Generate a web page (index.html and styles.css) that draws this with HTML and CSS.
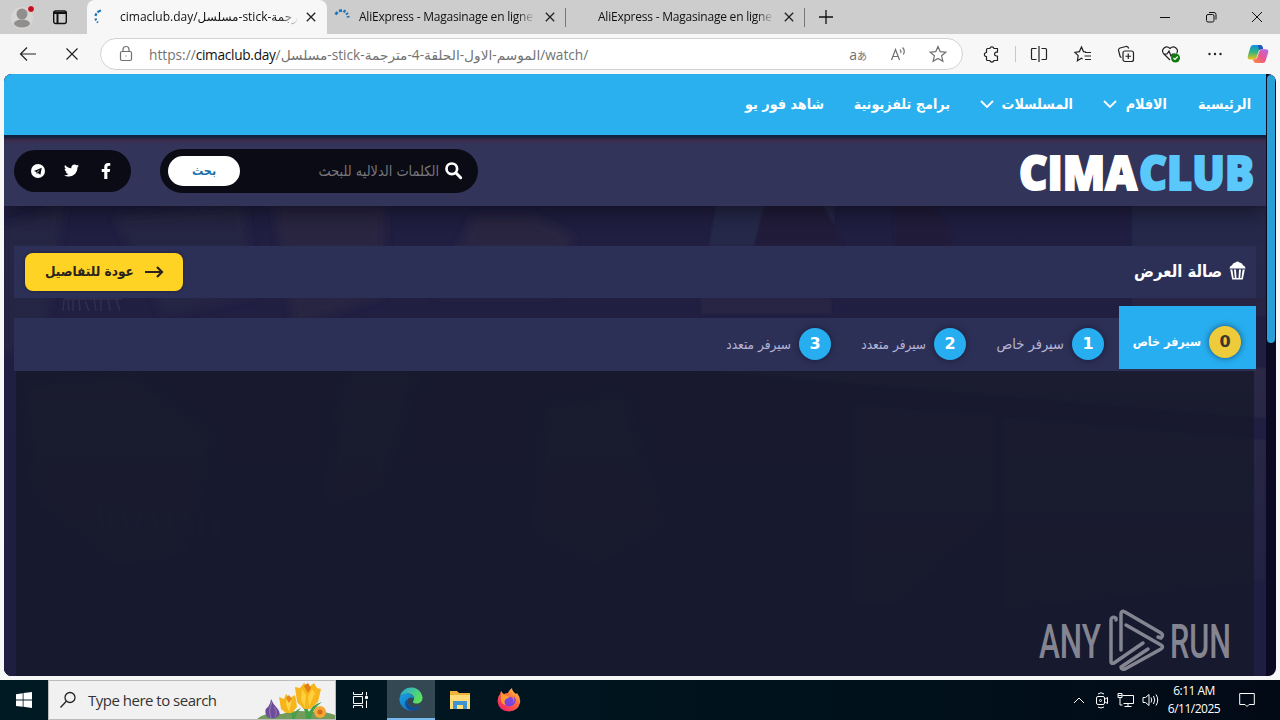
FILE: index.html
```
<!DOCTYPE html>
<html lang="en" dir="ltr">
<head>
  <title>cimaclub.day</title>
  <meta charset="utf-8">
  <link rel="stylesheet" href="styles.css">
</head>
<body>
  <!-- tabs -->
  <div class="tabs">
    <svg class="profile" width="26" height="26" viewBox="0 0 26 26"><circle cx="13" cy="14" r="11" fill="#d8d6d4"/><circle cx="13" cy="10" r="5.5" fill="#918f8d"/><ellipse cx="13" cy="19.500" rx="8" ry="4" fill="#918f8d"/><circle cx="22" cy="5" r="3.500" fill="#c50f1f" stroke="#ddd" stroke-width="1"/></svg>
    <svg class="tab-menu" width="16" height="16" viewBox="0 0 16 16" fill="none" stroke="#111" stroke-width="1.400"><rect x="1.700" y="2" width="12.600" height="12.500" rx="2"/><path d="M2 4h12M5.500 5v9" stroke-width="2"/></svg>
    <div class="tab active">
      <svg width="16" height="16" viewBox="0 0 16 16" fill="none" stroke="#1b74b8" stroke-width="2.200"><path d="M9 1.500C6.500 2 4 4 3.500 7" stroke-dasharray="4 1.500"/><path d="M3.500 9.500c.3 1.500 1.200 3 2.500 4" stroke-dasharray="2 1.500"/></svg>
      <span class="tab-title t1">cimaclub.day/مسلسل-stick-مترجمة</span>
      <svg class="close" width="10" height="10" viewBox="0 0 10 10"><path d="M.8.8l8.400 8.400M9.200.8L.8 9.200"/></svg>
    </div>
    <div class="tab">
      <svg width="16" height="16" viewBox="0 0 16 16" fill="none" stroke="#1b74b8" stroke-width="2.800"><path d="M.5 5.500l2-2.500M4 2l3-.7M8.500 1.800l2 1M11.500 4l1 1.500M13 7l.3 1.500"/></svg>
      <span class="tab-title t2">AliExpress - Magasinage en ligne</span>
      <svg class="close" width="10" height="10" viewBox="0 0 10 10"><path d="M.8.8l8.400 8.400M9.200.8L.8 9.200"/></svg>
    </div>
    <div class="tab">
      <svg width="16" height="16"></svg>
      <span class="tab-title t2">AliExpress - Magasinage en ligne</span>
      <svg class="close" width="10" height="10" viewBox="0 0 10 10"><path d="M.8.8l8.400 8.400M9.200.8L.8 9.200"/></svg>
    </div>
    <svg class="new-tab" width="14" height="14" viewBox="0 0 14 14" stroke="#111" stroke-width="1.300"><path d="M7 0v14M0 7h14"/></svg>
    <div class="window-buttons">
      <svg width="12" height="12" viewBox="0 0 12 12"><path d="M1 6.500h10"/></svg>
      <svg width="12" height="12" viewBox="0 0 12 12"><rect x="1.500" y="3.500" width="7.500" height="7.500" rx="1.500"/><path d="M4 1.500h5a2 2 0 0 1 2 2v5"/></svg>
      <svg width="12" height="12" viewBox="0 0 12 12"><path d="M1 1l10 10M11 1L1 11"/></svg>
    </div>
  </div>

  <!-- address bar -->
  <div class="toolbar">
    <svg class="back" width="18" height="16" viewBox="0 0 18 16"><path d="M17 8H2M8 1.500L1.500 8 8 14.500"/></svg>
    <svg class="stop" width="14" height="14" viewBox="0 0 14 14"><path d="M1.500 1.500l11 11M12.500 1.500l-11 11"/></svg>
    <div class="address">
      <svg width="14" height="16" viewBox="0 0 14 16" stroke="#666"><rect x="1.500" y="5.500" width="11" height="9" rx="1.500"/><path d="M4 5.500V3.500a3 3 0 0 1 6 0v2M6.500 10h1"/></svg>
      <div class="url">https://<b>cimaclub.day</b>/مسلسل-stick-الموسم-الاول-الحلقة-4-مترجمة/watch/</div>
      <span class="translate">a<small>あ</small></span>
      <svg width="18" height="16" viewBox="0 0 18 16" stroke="#707070"><path d="M2.500 14L6.500 3.500l4 10.500M4 10.500h5M11 3.500c1 1 1.300 2 .8 3.500M13.500 1.500c2 2 2.300 4.500.8 7"/></svg>
      <svg width="18" height="18" viewBox="0 0 18 18" stroke="#707070"><path d="M9 1.500l2.200 5.100 5.600.5-4.200 3.700 1.300 5.500L9 13.400l-4.900 2.900 1.300-5.500L1.200 7.100l5.600-.5z"/></svg>
    </div>
    <div class="tools">
      <svg width="18" height="18" viewBox="0 0 18 18"><path d="M4.500 3.500h2.300a2.200 2.200 0 0 1 4.200 0h3.500v3.700h-1a1.900 1.900 0 0 0 0 3.800h1v4.500H11a2.200 2.200 0 0 1-4.200 0H4.500a1 1 0 0 1-1-1v-2.800a2.100 2.100 0 0 1 0-4.200v-3a1 1 0 0 1 1-1z" stroke-linejoin="round"/></svg>
      <i></i>
      <svg width="18" height="18" viewBox="0 0 18 18"><path d="M6.500 3.500h-4a1 1 0 0 0-1 1v9a1 1 0 0 0 1 1h4M11.500 3.500h4a1 1 0 0 1 1 1v9a1 1 0 0 1-1 1h-4M9 1v16"/></svg>
      <svg width="18" height="18" viewBox="0 0 18 18"><path d="M12 7l-2.500-.4L7.500 2 5.400 6.600l-4.500.7 3.300 3.400-.8 5 4-2.400 1.200.7M11 7.500h6M10.500 11H17M11 14.500h6"/></svg>
      <svg width="18" height="18" viewBox="0 0 18 18"><rect x="6" y="6" width="10.500" height="10.500" rx="2"/><path d="M11.250 8.500v5.500M8.500 11.250H14M4.500 12.500A2 2 0 0 1 3 11L1.500 5.500A2.300 2.300 0 0 1 3 3l6-1.500c1.500-.3 2.300.5 2.700 2"/></svg>
      <svg width="20" height="18" viewBox="0 0 20 18"><path d="M9 15L2.500 8.500c-3-4 2.500-9 6.500-5 4-4 9.500 1 6.500 5M3 9h3l2-3 2 5 1.500-2H14"/><circle cx="14.500" cy="13" r="4.500" fill="#107c10" stroke="none"/><path d="M12.500 13l1.500 1.500 2.700-3" stroke="#fff"/></svg>
      <svg width="18" height="18" viewBox="0 0 18 18" class="dots"><circle cx="3.500" cy="9" r="1.200"/><circle cx="9" cy="9" r="1.200"/><circle cx="14.500" cy="9" r="1.200"/></svg>
      <svg class="copilot" width="22" height="20" viewBox="0 0 22 20">
        <defs>
          <linearGradient id="c1" x1="0" y1="0" x2="0" y2="1"><stop offset="0" stop-color="#0d91e1"/><stop offset=".5" stop-color="#35b57a"/><stop offset="1" stop-color="#f3c21b"/></linearGradient>
          <linearGradient id="c2" x1="1" y1="0" x2="0" y2="1"><stop offset="0" stop-color="#b36bf2"/><stop offset=".5" stop-color="#e9568f"/><stop offset="1" stop-color="#ff8a3c"/></linearGradient>
        </defs>
        <path d="M6 1h7q2 0 2.500 2l.7 2.200h-2q-2 0-2.600 2l-2 6.500q-.6 1.800-2.600 1.800H3Q.2 15.500.8 12L3.300 3.500Q4 1 6 1z" fill="url(#c1)" stroke="none"/>
        <path d="M11 1h2.500q1.500 0 2 1.700l.8 2.500h-2.100q-1.700 0-2.300 1z" fill="#1f55c4" stroke="none"/>
        <path d="M16 19H9q-2 0-2.500-2l-.6-1.800h2q1.800 0 2.500-2l2-6.200q.6-1.800 2.600-1.800h4q2.800 0 2.200 3.300L18.700 16.500Q18 19 16 19z" fill="url(#c2)" stroke="none"/>
      </svg>
    </div>
  </div>

  <div class="frame">
    <div class="page" dir="rtl">
      <!-- faded poster wall behind the content -->
      <svg class="backdrop" width="1262" height="470" viewBox="0 0 1262 470">
        <defs>
          <linearGradient id="fade" x1="0" y1="0" x2="0" y2="1"><stop offset="0" stop-color="#1f1e3f" stop-opacity="0"/><stop offset="1" stop-color="#1f1e40"/></linearGradient>
          <filter id="soft"><feGaussianBlur stdDeviation="5"/></filter>
          <filter id="edge"><feGaussianBlur stdDeviation="1"/></filter>
        </defs>
        <rect width="1262" height="470" fill="#211f42"/>
        <g filter="url(#soft)">
          <path d="M0 20L60 0l-20 130L0 150zM110 10l130-10 10 90-90 20z" fill="#272644"/>
          <path d="M270 0h110v90l-90 30zM470 10h60l40 20-20 60h-120z" fill="#2a2642"/>
          <path d="M20 180l110-10 80 60-30 120-70 10-80-70zM340 170h70l-30 110-60 20zM540 200l80-10 40 130-70 40-60-30z" fill="#2d2b47"/>
        </g>
        <g filter="url(#edge)">
          <path d="M712 0h118v40H705zM1128 0h134v110h-134z" fill="#282a4b"/>
          <path d="M760 0h60l20 40h-90zM890 0h40l20 30-20 40h-40z" fill="#201d3b"/>
          <path d="M697 92h130v16H697zM1128 92h134v16h-134z" fill="#292745"/>
          <path d="M850 200l140 10v100l-100 90h-40zM1000 212l262 22v140l-262 30zM695 164l160 14 407 34v-50H695z" fill="#312f4c"/>
        </g>
        <g fill="none" stroke="#42415f" stroke-width="1.500" opacity=".6"><path d="M60 93h58M60 94l-1 11M64 94l1 11M69 94v11M75 93l1 12M81 95l4 10M90 93l2 12M97 93v12M104 93l2 12M112 93l4 12"/></g>
        <g fill="none" stroke="#42415f" stroke-width="5" opacity=".3"><path d="M95 298l3 24M107 300v22M120 302l3 22M136 304l-3 22M150 306l3 20M166 306v21M182 307l2 21M198 308l-2 21M212 309v20"/></g>
        <rect width="1262" height="470" fill="url(#fade)"/>
      </svg>

      <div class="nav">
        <a class="n1">الرئيسية</a>
        <a class="n2">الافلام<svg width="14" height="8" viewBox="0 0 14 8"><path d="M1 1l6 6 6-6"/></svg></a>
        <a class="n3">المسلسلات<svg width="14" height="8" viewBox="0 0 14 8"><path d="M1 1l6 6 6-6"/></svg></a>
        <a class="n4">برامج تلفزيونية</a>
        <a class="n5">شاهد فور يو</a>
      </div>

      <div class="header">
        <svg class="logo" width="238" height="50" viewBox="0 0 238 50" direction="ltr"><text x="2" y="40" textLength="118" lengthAdjust="spacingAndGlyphs" fill="#fff" stroke="#fff">CIMA</text><text x="122" y="40" textLength="115" lengthAdjust="spacingAndGlyphs" fill="#5bc8fc" stroke="#5bc8fc">CLUB</text></svg>
        <div class="search">
          <svg width="17" height="17" viewBox="0 0 17 17" fill="none" stroke="#fff"><circle cx="6.800" cy="6.800" r="5.300" stroke-width="2.700"/><path d="M11 11l4.700 4.700" stroke-width="3" stroke-linecap="round"/></svg>
          <span class="placeholder">الكلمات الدلاليه للبحث</span>
          <button type="button">بحث</button>
        </div>
        <div class="social">
          <svg width="10" height="16" viewBox="0 0 320 512"><path d="M279 288l14-93h-89v-60c0-25 12-50 52-50h41V7s-37-7-72-7c-73 0-121 44-121 125v70H23v93h81v224h100V288z"/></svg>
          <svg width="15" height="15" viewBox="0 0 512 512"><path d="M459 152c.3 4.500.3 9 .3 13.600C459.300 304 354 464 161 464 102 464 47 447 0 417c8 1 16 1.300 25 1.300 49 0 94-17 130-45-46-1-85-31-98-73 6 1 13 1.600 20 1.600 9 0 19-1.300 28-3.600C57 288 21 246 21 195v-1.300c14 8 30 13 47 13.600C40 188 21 156 21 119c0-19 5-37 14-53 52 64 130 105 217 110-2-8-2.600-16-2.600-24 0-58 47-105 105-105 30 0 57 13 77 33 24-4.500 46-13 67-25-8 24-24 45-46 58 21-2.300 42-8 60-16-14 21-32 39-53 55z"/></svg>
          <svg width="14" height="14" viewBox="0 0 14 14"><circle cx="7" cy="7" r="7"/><path d="M3 7l7.800-3.200-1.400 7-2.600-1.700-1.200 1.100V8.300z" fill="#0a0b14"/><path d="M6 8l3-2.700L6.700 8.500z" fill="#fff"/></svg>
        </div>
      </div>

      <div class="content">
        <div class="title-bar">
          <svg class="popcorn" width="17" height="19" viewBox="0 0 17 19" fill="#fff"><path d="M.5 7.500Q.5 5 3 4.200 4 1.500 6.500 1.500 8.500-.5 10.500 1.500 13 1.500 14 4.200q2.500.8 2.500 3.300zM1.200 8.500h2.200l1.200 8.500h1.200L5 8.500h2l.5 8.500h2l.5-8.500h2l-.8 8.500h1.200l1.200-8.500h2.200l-2 10H3.200z"/></svg>
          <h1>صالة العرض</h1>
          <a class="details"><svg width="20" height="14" viewBox="0 0 20 14"><path d="M1 7h17M13 2l5 5-5 5"/></svg><span>عودة للتفاصيل</span></a>
        </div>
        <div class="servers">
          <div class="server selected"><em>0</em><span>سيرفر خاص</span></div>
          <div class="server wide"><em>1</em><span>سيرفر خاص</span></div>
          <div class="server"><em>2</em><span>سيرفر متعدد</span></div>
          <div class="server"><em>3</em><span>سيرفر متعدد</span></div>
        </div>
        <div class="player"></div>
      </div>
    </div>
    <div class="scrollbar"><div class="thumb"></div></div>
    <svg class="watermark" width="194" height="64" viewBox="0 0 194 64">
      <text x="1" y="50" textLength="62" lengthAdjust="spacingAndGlyphs">ANY</text>
      <text x="132" y="50" textLength="61" lengthAdjust="spacingAndGlyphs">RUN</text>
      <g fill="none" stroke="#858592" stroke-width="3.500" stroke-linejoin="round" stroke-linecap="round"><path d="M78 12v-2q-5-2-5 2v42q0 2 3 1l29-20"/><path d="M83 42V6q0-4 4-2l36 21q3 2 0 5l-3-1"/><path d="M88 17l35 20q3 2 0 4L87 61q-4 1-4-2l27-18"/></g>
    </svg>
  </div>

  <!-- taskbar -->
  <div class="taskbar">
    <div class="start"><svg width="16" height="16" viewBox="0 0 16 16" fill="#fff"><path d="M0 2.200L6.700 1.200v6.400H0zM7.500 1.100L16 0v7.600H7.500zM0 8.400h6.700v6.400L0 13.900zM7.500 8.400H16V16l-8.500-1.200z"/></svg></div>
    <div class="task-search">
      <svg width="18" height="18" viewBox="0 0 18 18" fill="none" stroke="#222" stroke-width="1.300"><circle cx="11" cy="6.500" r="5"/><path d="M7.300 10.200L1.500 16.500"/></svg>
      <span>Type here to search</span>
      <svg class="flowers" width="78" height="38" viewBox="0 0 78 38">
        <path d="M0 38q8-7 25-5 12-5 30-2 10-2 23 3v4z" fill="#729b5c"/>
        <path d="M35 38q1-7-7-12 8 0 9 8 1-5 7-7-5 5-6 11zM49 38q0-12-9-17 10 2 12 10 4-8 13-10-10 7-11 17z" fill="#43a047"/>
        <path d="M14 18q2 5 6 9 6 7-2 10-7 1-9-3-2-6 2-8 3-4 3-8z" fill="#6c4b98"/><path d="M15 21q-4 9-1 16M17 26q4 5 1 10" stroke="#9b7cc0" fill="none"/>
        <path d="M22 16l5 2 2-5 4 4 5-3 1 5 1 7-5 6h-6l-5-4z" fill="#f7b51c"/><path d="M30 16l5 2-3 13-3-8z" fill="#ffd54b"/><path d="M29 17l3-3 3 4-3 4z" fill="#e88a1a"/>
        <path d="M38 6l5 1 4-5 5 4 5-4 3 5 4 1-3 13-8 7h-6l-7-7z" fill="#f7b51c"/><path d="M45 8l4 6-1 13-4-8zM55 8l3 4-6 14-1-10z" fill="#ffd03c"/><path d="M47 5l4-3 3 5-3 5z" fill="#e27c16"/>
        <circle cx="63" cy="31" r="6" fill="#f7a735"/><circle cx="63" cy="31" r="2.500" fill="#d56c1b"/>
      </svg>
    </div>
    <div class="app"><svg width="16" height="16" viewBox="0 0 16 16" fill="none" stroke="#fff"><path d="M.5 0v2.500h9V0M.5 16v-2.500h9V16M.500 4.500h9v7h-9zM13.500 0v3.500M13.500 8.500V16"/><path d="M12.500 4.500h2v2h-2z" fill="#fff"/></svg></div>
    <div class="app running"><svg width="24" height="24" viewBox="0 0 24 24">
      <defs><linearGradient id="e1" x1="0" y1="0" x2="1" y2=".5"><stop offset="0" stop-color="#26a5e5"/><stop offset="1" stop-color="#5ce05b"/></linearGradient><linearGradient id="e2" x1="0" y1="0" x2="1" y2="1"><stop offset="0" stop-color="#1ba0e2"/><stop offset="1" stop-color="#1265b7"/></linearGradient></defs>
      <path d="M1 9C3 3 8 0 13 .5c6 .5 10 5 10.500 10 .3 4-3 6.500-7 6-3-.3-3-1.500-2-2.700 2-3.500-1-7-5-7.300C5 6.500 2 8 1 9z" fill="url(#e1)"/>
      <path d="M.5 11C1.500 7 6 6 9.500 6.500c3 .4 5.500 3 5 5.500-1-2-4-2-5.500 0-3 5 3 10 10 7.500 2-1 2.500-.5 1.500.5C18 23 13 24.500 8.500 23 3 21 0 16 .5 11z" fill="url(#e2)"/>
      <path d="M9 12c-3 5 3 10 10 7.500 2-1 2.500-.5 1.500.5C18 23 14 24 10.500 23 5 20 5 14 9 12z" fill="#104b95"/>
    </svg></div>
    <div class="app"><svg width="22" height="20" viewBox="0 0 22 20"><path d="M1 1h7l2 2h11v16H1z" fill="#f0b43a"/><path d="M1 5h20v14H1z" fill="#ffdc78"/><path d="M4 11h14v8h-4v-4H8v4H4z" fill="#3f93d0"/></svg></div>
    <div class="app"><svg width="24" height="24" viewBox="0 0 24 24">
      <defs><linearGradient id="f" x1="1" y1="0" x2=".2" y2="1"><stop offset="0" stop-color="#ffe34c"/><stop offset=".45" stop-color="#ff7139"/><stop offset="1" stop-color="#ee1f6b"/></linearGradient></defs>
      <path d="M3 6l1-3q1 2 3 3 2-1 4-1 1-3 4-5 0 3 4 6l1-1q4 5 3 10-2 8-11 8.500Q2 23 .6 14 .3 9 3 6z" fill="url(#f)"/><path d="M7 9q5-1 6 1l-3 1q-2 2 0 4 4 2 7-1 1-4-1-6 4 2 2 7-3 4-8 3-5-3-3-9z" fill="#7a3fe0"/>
      <circle cx="12.500" cy="12.500" r="3.800" fill="#7a45dc"/>
      <path d="M4 3q1 3 4 4l5 2-4 2q-3 3 0 6-6-1-5-8z" fill="#ff9a30"/>
    </svg></div>
    <div class="tray">
      <svg width="12" height="7" viewBox="0 0 12 7"><path d="M1 6l5-5 5 5"/></svg>
      <svg width="14" height="18" viewBox="0 0 14 18"><rect x="1.500" y="5.500" width="8" height="8" rx="1.500"/><path d="M9.500 8.500l3-2v6l-3-2M3 3q3-2.500 6 0M3 16q3 2 6 0"/><circle cx="5.500" cy="9.500" r="1"/></svg>
      <svg width="17" height="16" viewBox="0 0 17 16"><path d="M5.500 3.500h11v8h-10M11 11.500v3M7.500 14.500h7M1 1.500h4v4H1zM3 5.500v7.500h2.500M1 3.500h4"/></svg>
      <svg width="17" height="16" viewBox="0 0 17 16"><path d="M1 5.500h2.500L7 2.500v11l-3.500-3H1zM9 5.500q1.500 2.500 0 5M11.500 4q2.500 4 0 8M14 2.500q3.500 5.500 0 11"/></svg>
    </div>
    <div class="clock">6:11 AM<br>6/11/2025</div>
    <svg class="notice" width="16" height="16" viewBox="0 0 16 16"><path d="M.7 1.500h14.600v11H10l-2 2-2-2H.7z"/></svg>
  </div>
</body>
</html>
```
FILE: styles.css
```
body {
  margin: 0;
  width: 1280px;
  height: 720px;
  overflow: hidden;
  display: flex;
  flex-direction: column;
  background: #f7f7f7;
  font-family: "Open Sans", "DejaVu Sans", sans-serif;
  font-size: 12px;
}
svg {
  flex: none;
  overflow: visible;
}
/* tabs */
.tabs {
  height: 34px;
  flex: none;
  display: flex;
  align-items: center;
  background: #cdcdcd;
}
.profile {
  margin-left: 9px;
}
.tab-menu {
  margin: 0 19px 0 17px;
}
.tab {
  box-sizing: border-box;
  width: 239px;
  height: 34px;
  padding: 0 9px 0 8px;
  display: flex;
  align-items: center;
  position: relative;
}
.tab + .tab::after {
  content: "";
  position: absolute;
  right: 0;
  top: 8px;
  height: 19px;
  border-right: 1px solid #777;
}
.tab.active {
  width: 240px;
  padding: 0 11px 0 5px;
  background: #f7f7f7;
  border-radius: 8px 8px 0 0;
}
.tab-title {
  overflow: hidden;
  white-space: nowrap;
  width: 176px;
  height: 18px;
  line-height: 18px;
  color: #111;
  -webkit-mask-image: linear-gradient(to right, #000 90%, transparent);
  mask-image: linear-gradient(to right, #000 90%, transparent);
}
.t1 {
  margin: 0 8px 0 12px;
  width: 178px;
}
.t2 {
  margin: 0 10px 0 8px;
  letter-spacing: -0.22px;
}
.close {
  fill: none;
  stroke: #222;
  stroke-width: 1.3;
}
.new-tab {
  margin-left: 14px;
}
.window-buttons {
  margin: 0 17px 0 auto;
  display: flex;
  gap: 34px;
}
.window-buttons svg {
  fill: none;
  stroke: #111;
}
/* address bar */
.toolbar {
  height: 40px;
  flex: none;
  display: flex;
  align-items: center;
}
.toolbar svg {
  fill: none;
  stroke: #222;
  stroke-width: 1.2;
}
.toolbar .address svg {
  stroke: #707070;
}
.back {
  margin-left: 19px;
}
.stop {
  margin: 0 21px 0 28px;
}
.address {
  box-sizing: border-box;
  width: 863px;
  height: 32px;
  display: flex;
  align-items: center;
  padding: 0 15px 0 18px;
  background: #fff;
  border: 1px solid #cfd3d8;
  border-radius: 16px;
}
.url {
  flex: 1;
  margin-left: 16px;
  font-size: 13.7px;
  white-space: nowrap;
  color: #737373;
}
.url b {
  font-weight: normal;
  letter-spacing: -0.3px;
  color: #111;
}
.translate {
  font-size: 14px;
  color: #707070;
  margin-right: 22px;
}
.translate small {
  font: 10px "Noto Sans CJK JP", sans-serif;
}
.address svg:last-child {
  margin-left: 22px;
}
.tools {
  display: flex;
  align-items: center;
  gap: 25.5px;
  flex: 1;
  padding-left: 20px;
}
.tools i {
  height: 16px;
  margin: 0 -11px 0 -12px;
  border-left: 1px solid #c8c8c8;
}
.toolbar .dots {
  fill: #222;
  stroke: none;
}
.copilot {
  margin-left: -3px;
}
/* web page */
.frame {
  width: 1272px;
  height: 602px;
  flex: none;
  margin-left: 4px;
  display: flex;
  position: relative;
  overflow: hidden;
  border-radius: 8px;
  background: #0b0a22;
}
.page {
  width: 1262px;
  position: relative;
  overflow: hidden;
  background: #1f1e40;
  font-family: "DejaVu Sans Condensed", "DejaVu Sans", sans-serif;
}
.backdrop {
  position: absolute;
  left: 0;
  top: 132px;
}
.nav {
  height: 61px;
  display: flex;
  align-items: center;
  gap: 30px;
  padding-right: 15px;
  position: relative;
  z-index: 2;
  background: #2ab0ee;
  color: #fff;
  font-weight: bold;
}
.nav a {
  display: flex;
  align-items: center;
  justify-content: space-between;
  white-space: nowrap;
  font-size: 14.2px;
  padding-bottom: 2px;
}
.nav svg {
  fill: none;
  stroke: #fff;
  stroke-width: 1.8;
}
.n1 {
  width: 54px;
}
.n2 {
  width: 64px;
}
.n3 {
  width: 93px;
}
.n4 {
  width: 96px;
}
.n5 {
  width: 83px;
}
.header {
  box-sizing: border-box;
  height: 71px;
  display: flex;
  align-items: center;
  padding: 0 11px 0 10px;
  background: linear-gradient(#13203f 2px, #3c2b4a 5px, #333459 9px, #333459);
  box-shadow: 0 5px 22px rgba(10, 10, 20, 0.7);
  position: relative;
}
.logo {
  margin-top: 8px;
  font: 800 47px "Open Sans", sans-serif;
  stroke-width: 2;
}
.search {
  box-sizing: border-box;
  width: 318px;
  height: 44px;
  margin-right: auto;
  display: flex;
  align-items: center;
  padding: 0 16px 0 8px;
  border-radius: 22px;
  background: #0a0b14;
}
.placeholder {
  flex: 1;
  margin-right: 6px;
  color: #77777b;
  font-size: 14.4px;
  white-space: nowrap;
}
.search button {
  width: 72px;
  height: 30px;
  border: 0;
  border-radius: 15px;
  background: #fff;
  color: #1470a8;
  font: bold 12.5px "DejaVu Sans Condensed", "DejaVu Sans", sans-serif;
}
.social {
  box-sizing: border-box;
  width: 117px;
  height: 42px;
  margin-right: 29px;
  display: flex;
  align-items: center;
  gap: 20px;
  padding-right: 20px;
  border-radius: 21px;
  background: #0a0b14;
  fill: #fff;
}
.social svg:nth-child(2) {
  margin-right: 2px;
  margin-left: -1px;
}
.content {
  position: relative;
  padding: 40px 10px 0;
}
.title-bar {
  box-sizing: border-box;
  height: 52px;
  display: flex;
  align-items: center;
  padding: 0 10px 0 11px;
  background: #2d3056;
}
.popcorn {
  margin-bottom: 3px;
}
.title-bar h1 {
  margin: 0 7px 2px auto;
  color: #fff;
  font-size: 16.5px;
  white-space: nowrap;
}
.details {
  box-sizing: border-box;
  width: 158px;
  height: 38px;
  display: flex;
  align-items: center;
  justify-content: space-between;
  padding: 0 19px 0 20px;
  border-radius: 8px;
  background: #ffd324;
  color: #29231c;
  font-size: 13.5px;
  font-weight: bold;
  white-space: nowrap;
  box-shadow: 0 0 3px #191a35;
}
.details span {
  margin-bottom: 3px;
}
.details svg {
  fill: none;
  stroke: #29231c;
  stroke-width: 2.2;
}
.servers {
  height: 53px;
  margin-top: 20px;
  display: flex;
  background: #2d3056;
}
.server {
  box-sizing: border-box;
  width: 135px;
  padding: 0 15px 2px;
  display: flex;
  align-items: center;
  gap: 8px;
  white-space: nowrap;
  color: #b4b4d6;
  font-size: 13.5px;
}
.server.wide {
  width: 138px;
}
.wide span {
  font-size: 14.5px;
}
.server em {
  flex: none;
  width: 32px;
  height: 32px;
  text-align: center;
  border-radius: 50%;
  background: #27aef0;
  color: #fff;
  font: bold 16px/32px "DejaVu Sans", sans-serif;
  box-shadow: 0 0 6px rgba(10, 12, 35, 0.6);
}
.server.selected {
  width: 137px;
  height: 63px;
  margin-top: -12px;
  padding-top: 8px;
  padding-bottom: 0;
  background: #27aef0;
  color: #fff;
  font-weight: bold;
  font-size: 12.5px;
}
.server.selected em {
  background: #eecb3a;
  color: #40362a;
}
.player {
  height: 310px;
  margin: 0 2px;
  background: rgba(21, 23, 39, 0.72);
}
.scrollbar {
  width: 10px;
}
.thumb {
  height: 268px;
  margin: 1px;
  border-radius: 4px;
  background: #299fd8;
}
.watermark {
  position: absolute;
  left: 1034px;
  top: 534px;
  fill: #858592;
  font: 500 48px "Roboto", sans-serif;
}
/* taskbar */
.taskbar {
  height: 40px;
  margin-top: 4px;
  flex: none;
  display: flex;
  align-items: center;
  background: linear-gradient(to right, #001a24, #00131d 60%, #020a16);
  color: #fff;
}
.start {
  width: 48px;
  display: flex;
  justify-content: center;
}
.task-search {
  box-sizing: border-box;
  width: 288px;
  height: 40px;
  border: 1px solid #bbb;
  background: #f2f1f2;
  display: flex;
  align-items: center;
  padding-left: 10px;
  color: #333;
  font-size: 15px;
  letter-spacing: -0.5px;
}
.task-search span {
  margin-left: 11px;
}
.flowers {
  margin-left: auto;
}
.app {
  width: 48px;
  height: 40px;
  margin-right: 1px;
  display: flex;
  align-items: center;
  justify-content: center;
}
.app:nth-child(3) {
  width: 50px;
}
.running {
  box-sizing: border-box;
  border-bottom: 2px solid #76b9ed;
  background: #334852;
}
.tray {
  display: flex;
  align-items: center;
  gap: 10px;
  margin-left: auto;
}
.tray svg,
.notice {
  fill: none;
  stroke: #fff;
}
.tray svg + svg {
  margin-right: -2px;
}
.clock {
  width: 66px;
  margin-left: 4px;
  text-align: center;
  font-size: 12px;
  line-height: 18px;
  letter-spacing: -0.5px;
}
.notice {
  margin: 0 25px 0 12px;
}
```
